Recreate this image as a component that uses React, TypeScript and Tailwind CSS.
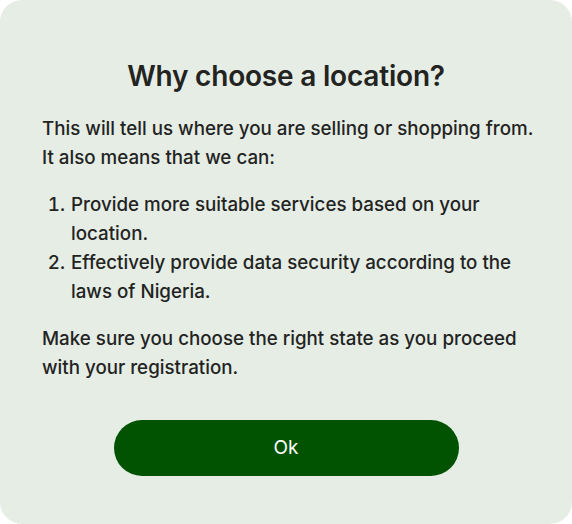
import React from "react";

export default function App() {
  return (
    <div className="w-[572px] h-[524px] bg-white" style={{ fontFamily: "Inter, 'Noto Sans', sans-serif" }}>
      <div className="w-full h-full rounded-[22px] bg-[#e5ede5] pl-[42px] pr-[34px] pt-[58px] text-[#23231f]">
        <h1 className="text-center text-[28px] leading-[36px] font-semibold tracking-[-0.2px] pr-[8px]">Why choose a location?</h1>
        <div className="mt-[20px] text-[18.75px] leading-[29px] font-medium">
          <p>This will tell us where you are selling or shopping from. It also means that we can:</p>
          <ol className="list-decimal pl-[28px] mt-[18px]">
            <li className="pl-[1px]">Provide more suitable services based on your location.</li>
            <li className="pl-[1px]">Effectively provide data security according to the laws of Nigeria.</li>
          </ol>
          <p className="mt-[18px]">Make sure you choose the right state as you proceed with your registration.</p>
        </div>
        <div className="flex justify-center mt-[38px] pr-[8px]">
          <button className="w-[345px] h-[56px] rounded-full bg-[#015201] text-white text-[19px]">Ok</button>
        </div>
      </div>
    </div>
  );
}
